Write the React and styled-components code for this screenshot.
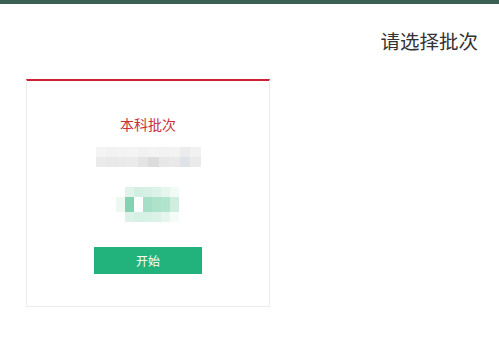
import React from "react";
import styled, { createGlobalStyle } from "styled-components";

const Global = createGlobalStyle`
  html, body { margin: 0; padding: 0; background: #ffffff; }
  body { font-family: "Noto Sans CJK SC", "Noto Sans", sans-serif; }
`;

const Page = styled.div`
  width: 499px;
  height: 338px;
  display: flex;
  flex-direction: column;
  overflow: hidden;
`;

const TopBar = styled.div`
  height: 4px;
  background: #3b5f51;
  flex: none;
`;

const Header = styled.div`
  display: flex;
  justify-content: flex-end;
  padding: 23px 21px 0 0;
  height: 27px;
`;

const Title = styled.h1`
  margin: 0;
  font-size: 19.5px;
  line-height: 27px;
  font-weight: 400;
  color: #333333;
`;

const Card = styled.div`
  margin: 25px 0 0 26px;
  width: 242px;
  border: 1px solid #ececec;
  border-top: 2px solid #cc2233;
  display: flex;
  flex-direction: column;
  align-items: center;
  padding: 33px 0 32px;
`;

const BatchName = styled.div`
  font-size: 14px;
  line-height: 20px;
  color: #c9303e;
`;

const Mosaic = styled.div`
  display: grid;
  grid-template-columns: repeat(${(p) => p.$cols}, ${(p) => p.$cw}px);
  grid-auto-rows: ${(p) => p.$rh};
  margin-top: ${(p) => p.$mt}px;
  margin-left: ${(p) => p.$ml || 0}px;
`;

const Cell = styled.div`
  background: ${(p) => p.$c};
`;

const StartButton = styled.button`
  margin-top: 25px;
  width: 108px;
  height: 27px;
  border: none;
  background: #22b27b;
  color: #ffffff;
  font-family: inherit;
  font-size: 12px;
  padding: 0;
  cursor: pointer;
`;

const grayRows = [
  ["#f4f4f4", "#f2f2f2", "#f3f3f3", "#f4f4f4", "#f1f1f1", "#f3f3f3", "#f2f2f2", "#f3f3f3", "#ebebed", "#f1f1f1"],
  ["#ebebeb", "#e9e9e9", "#eaeaea", "#ebebeb", "#e4e4e4", "#dcdcdc", "#e7e7e7", "#e9e9e9", "#dfe3e7", "#eaeaea"],
];

const greenRows = [
  ["#ffffff", "#e0f3ea", "#d3efe3", "#d6f0e5", "#dbf2e8", "#e6f6ee", "#f2faf6"],
  ["#eef8f3", "#84d2b1", "#ffffff", "#a6dfc7", "#aee2cb", "#b2e3ce", "#cfeee0"],
  ["#ffffff", "#dbf2e8", "#d5f0e4", "#d8f1e6", "#dcf2e9", "#e6f6ee", "#f4fbf8"],
];

export default function App() {
  return (
    <Page>
      <Global />
      <TopBar />
      <Header>
        <Title>请选择批次</Title>
      </Header>
      <Card>
        <BatchName>本科批次</BatchName>
        <Mosaic $cols={10} $cw={10.5} $rh="10px" $mt={13}>
          {grayRows.flat().map((c, i) => (
            <Cell key={i} $c={c} />
          ))}
        </Mosaic>
        <Mosaic $cols={7} $cw={9} $rh="10px 15px 10px" $mt={20} $ml={-2}>
          {greenRows.flat().map((c, i) => (
            <Cell key={i} $c={c} />
          ))}
        </Mosaic>
        <StartButton>开始</StartButton>
      </Card>
    </Page>
  );
}
